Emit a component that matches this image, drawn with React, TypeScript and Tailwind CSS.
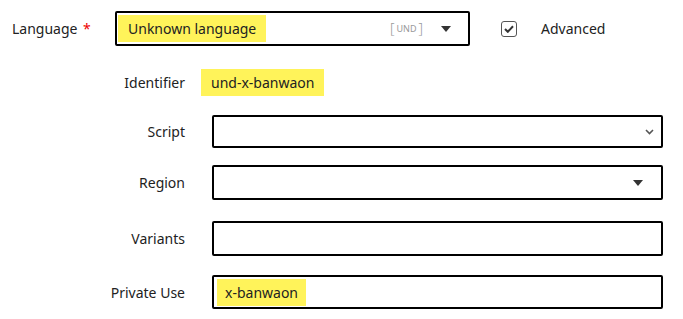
import React from 'react';

const font = { fontFamily: '"Noto Sans", "Open Sans", sans-serif' };

const Label = ({ children }: { children: React.ReactNode }) => (
  <div className="w-[185px] shrink-0 text-right text-[14px] text-[#222]">{children}</div>
);

const Caret = () => (
  <svg width="10" height="6" viewBox="0 0 10 6" className="shrink-0">
    <path d="M0 0h10L5 6z" fill="#333" />
  </svg>
);

export default function App() {
  return (
    <div className="w-[683px] h-[319px] bg-white text-[#222] relative" style={font}>
      {/* Language row */}
      <div className="flex items-center pt-[11px] pl-[12px]">
        <div className="w-[103px] shrink-0 text-[14px] text-[#222]">
          Language <span className="text-[#e00] ml-[2px]">*</span>
        </div>
        <div className="w-[355px] h-[35px] border-2 border-black rounded-[2px] flex items-center pl-[1px] pr-[17px]">
          <span className="bg-[#fff35a] h-[27px] flex items-center px-[10px] text-[14px] text-[#222]">
            Unknown language
          </span>
          <span className="ml-auto mr-[18px] text-[#999] flex items-center">
            <span className="text-[14px] leading-none font-light">[</span>
            <span className="text-[9px] leading-none px-[2px]">UND</span>
            <span className="text-[14px] leading-none font-light">]</span>
          </span>
          <Caret />
        </div>
        <div className="ml-[31px] w-[16px] h-[16px] border border-[#555] rounded-[3px] flex items-center justify-center">
          <svg width="10" height="8" viewBox="0 0 10 8">
            <path d="M1 4l2.8 2.8L9 1.3" stroke="#333" strokeWidth="2" fill="none" />
          </svg>
        </div>
        <span className="ml-[24px] text-[14px] text-[#222]">Advanced</span>
      </div>

      {/* Identifier row */}
      <div className="flex items-center mt-[23px]">
        <Label>Identifier</Label>
        <span className="ml-[16px] bg-[#fff35a] h-[27px] flex items-center px-[10px] text-[14px] text-[#222]">
          und-x-banwaon
        </span>
      </div>

      <div className="flex flex-col gap-[17px] mt-[19px] pr-[20px]">
        <div className="flex items-center">
          <Label>Script</Label>
          <div className="ml-[27px] flex-1 h-[33px] border-2 border-black rounded-[2px] flex items-center justify-end pr-[7px]">
            <svg width="9" height="6" viewBox="0 0 9 6">
              <path d="M1 1l3.5 3.5L8 1" stroke="#555" strokeWidth="1.6" fill="none" />
            </svg>
          </div>
        </div>
        <div className="flex items-center">
          <Label>Region</Label>
          <div className="ml-[27px] flex-1 h-[35px] border-2 border-black rounded-[2px] flex items-center justify-end pr-[18px]">
            <Caret />
          </div>
        </div>
        <div className="flex items-center mt-[4px]">
          <Label>Variants</Label>
          <div className="ml-[27px] flex-1 h-[35px] border-2 border-black rounded-[2px]" />
        </div>
        <div className="flex items-center mt-[2px]">
          <Label>Private Use</Label>
          <div className="ml-[27px] flex-1 h-[34px] border-2 border-black rounded-[2px] flex items-center pl-[3px]">
            <span className="bg-[#fff35a] h-[27px] flex items-center px-[8px] text-[14px] text-[#222]">
              x-banwaon
            </span>
          </div>
        </div>
      </div>
    </div>
  );
}
